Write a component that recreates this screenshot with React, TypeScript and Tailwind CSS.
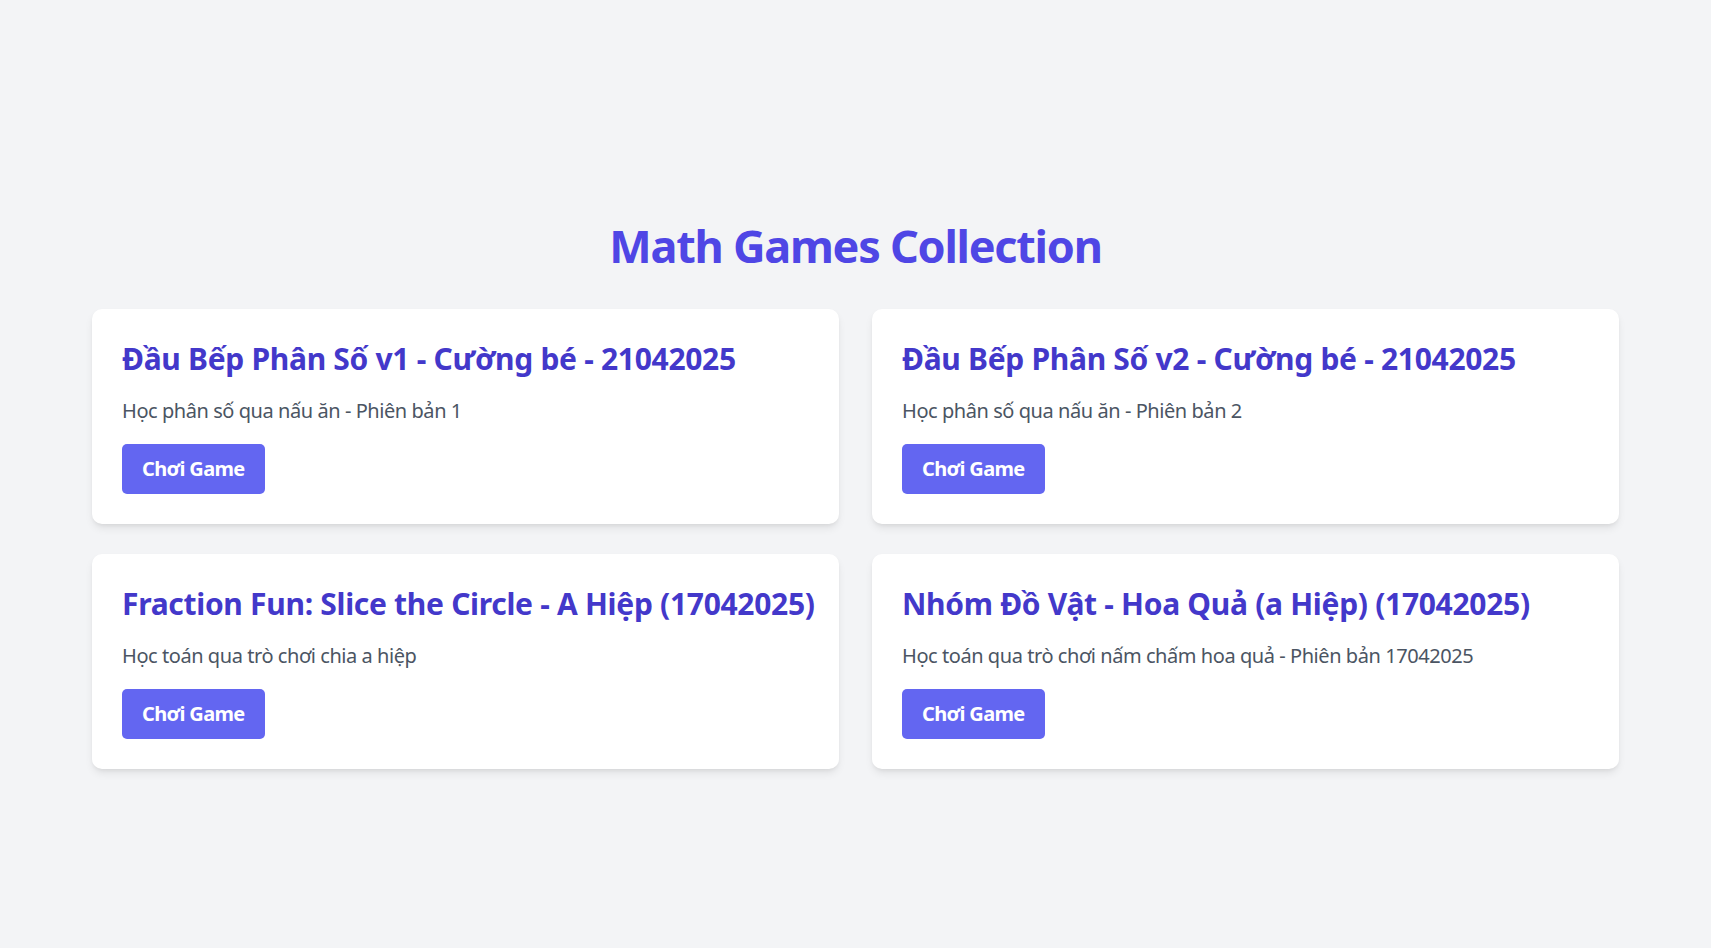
import React from "react";

type Game = { title: string; desc: string };

const games: Game[] = [
    { title: "Đầu Bếp Phân Số v1 - Cường bé - 21042025", desc: "Học phân số qua nấu ăn - Phiên bản 1" },
    { title: "Đầu Bếp Phân Số v2 - Cường bé - 21042025", desc: "Học phân số qua nấu ăn - Phiên bản 2" },
    { title: "Fraction Fun: Slice the Circle - A Hiệp (17042025)", desc: "Học toán qua trò chơi chia a hiệp" },
    { title: "Nhóm Đồ Vật - Hoa Quả (a Hiệp) (17042025)", desc: "Học toán qua trò chơi nấm chấm hoa quả - Phiên bản 17042025" },
];

function GameCard({ game }: { game: Game }) {
    return (
        <div className="bg-white rounded-[10px] p-[30px] shadow-[0_5px_10px_-2px_rgba(0,0,0,0.1),0_2px_5px_-2px_rgba(0,0,0,0.08)]">
            <h2 className="text-[30px] leading-[40px] font-bold text-[#4338ca] mb-[17px] whitespace-nowrap tracking-[-0.01em]">
                {game.title}
            </h2>
            <p className="text-[20px] leading-[30px] text-[#4b5563] mb-[18px] tracking-[-0.022em]">
                {game.desc}
            </p>
            <button className="bg-[#6366f1] text-white font-bold text-[20px] leading-[30px] px-[20px] py-[10px] rounded-[5px] tracking-[-0.033em]">
                Chơi Game
            </button>
        </div>
    );
}

export default function App() {
    return (
        <div
            className="min-h-screen bg-[#f3f4f6] pt-[221px]"
            style={{ fontFamily: '"Noto Sans", "Open Sans", sans-serif' }}
        >
            <div className="w-[1527px] mx-auto">
                <h1 className="text-center text-[45px] leading-[50px] font-bold text-[#4f46e5] mb-[38px] tracking-[-0.028em]">
                    Math Games Collection
                </h1>
                <div className="grid grid-cols-2 gap-x-[33px] gap-y-[30px]">
                    {games.map((g) => (
                        <GameCard key={g.title} game={g} />
                    ))}
                </div>
            </div>
        </div>
    );
}
